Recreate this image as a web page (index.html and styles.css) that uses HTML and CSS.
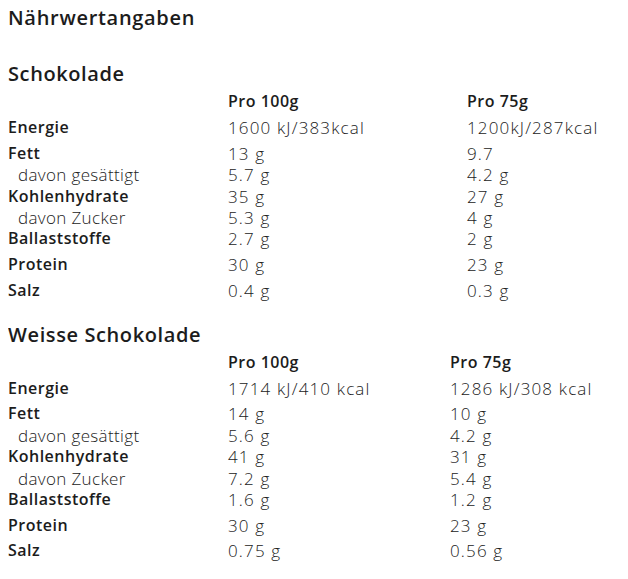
FILE: index.html
```html
<!DOCTYPE html>
<html lang="de">
<head>
<meta charset="utf-8">
<title>Nährwertangaben</title>
<link rel="stylesheet" href="styles.css">
</head>
<body>
<h2 class="title">Nährwertangaben</h2>

<h3 class="section">Schokolade</h3>
<table class="nutri nutri-a">
  <colgroup><col class="c1"><col class="c2"><col class="c3"></colgroup>
  <tr><th></th><th>Pro 100g</th><th>Pro 75g</th></tr>
  <tr><th>Energie</th><td>1600 kJ/383kcal</td><td>1200kJ/287kcal</td></tr>
  <tr>
    <th>Fett<br><span class="sub">davon gesättigt</span><br>Kohlenhydrate<br><span class="sub">davon Zucker</span><br>Ballaststoffe</th>
    <td>13 g<br>5.7 g<br>35 g<br>5.3 g<br>2.7 g</td>
    <td>9.7<br>4.2 g<br>27 g<br>4 g<br>2 g</td>
  </tr>
  <tr><th>Protein</th><td>30 g</td><td>23 g</td></tr>
  <tr><th>Salz</th><td>0.4 g</td><td>0.3 g</td></tr>
</table>

<h3 class="section section-second">Weisse Schokolade</h3>
<table class="nutri nutri-b">
  <colgroup><col class="c1"><col class="c2"><col class="c3"></colgroup>
  <tr><th></th><th>Pro 100g</th><th>Pro 75g</th></tr>
  <tr><th>Energie</th><td>1714 kJ/410 kcal</td><td>1286 kJ/308 kcal</td></tr>
  <tr>
    <th>Fett<br><span class="sub">davon gesättigt</span><br>Kohlenhydrate<br><span class="sub">davon Zucker</span><br>Ballaststoffe</th>
    <td>14 g<br>5.6 g<br>41 g<br>7.2 g<br>1.6 g</td>
    <td>10 g<br>4.2 g<br>31 g<br>5.4 g<br>1.2 g</td>
  </tr>
  <tr><th>Protein</th><td>30 g</td><td>23 g</td></tr>
  <tr><th>Salz</th><td>0.75 g</td><td>0.56 g</td></tr>
</table>
</body>
</html>
```

FILE: styles.css
```css
body {
  margin: 8px;
  font-family: "Open Sans", "Noto Sans", sans-serif;
  color: #1c1c1c;
  background: #fff;
}
.title {
  font-size: 20px;
  font-weight: 600;
  letter-spacing: 0.7px;
  margin: 0;
  line-height: 20px;
}
.section {
  font-size: 20px;
  font-weight: 600;
  letter-spacing: 0.6px;
  margin: 34px 0 0 0;
  line-height: 24px;
}
.section-second {
  margin-top: 19px;
}
.nutri {
  border-collapse: collapse;
  table-layout: fixed;
  width: 620px;
  margin-top: 3px;
  font-size: 16px;
}
.nutri .c1 { width: 220px; }
.nutri-a .c2 { width: 239px; }
.nutri-b .c2 { width: 222px; }
.nutri th, .nutri td {
  padding: 2.2px 0;
  line-height: 21.4px;
  text-align: left;
  vertical-align: top;
  white-space: nowrap;
}
.nutri th {
  font-weight: 600;
  color: #1c1c1c;
  letter-spacing: 0.5px;
}
.nutri td {
  font-size: 17px;
  font-weight: 300;
  color: #222;
  letter-spacing: 1.15px;
}
.nutri .sub {
  font-size: 17px;
  font-weight: 300;
  color: #222;
  letter-spacing: 0.35px;
  padding-left: 10px;
  vertical-align: top;
}
```
